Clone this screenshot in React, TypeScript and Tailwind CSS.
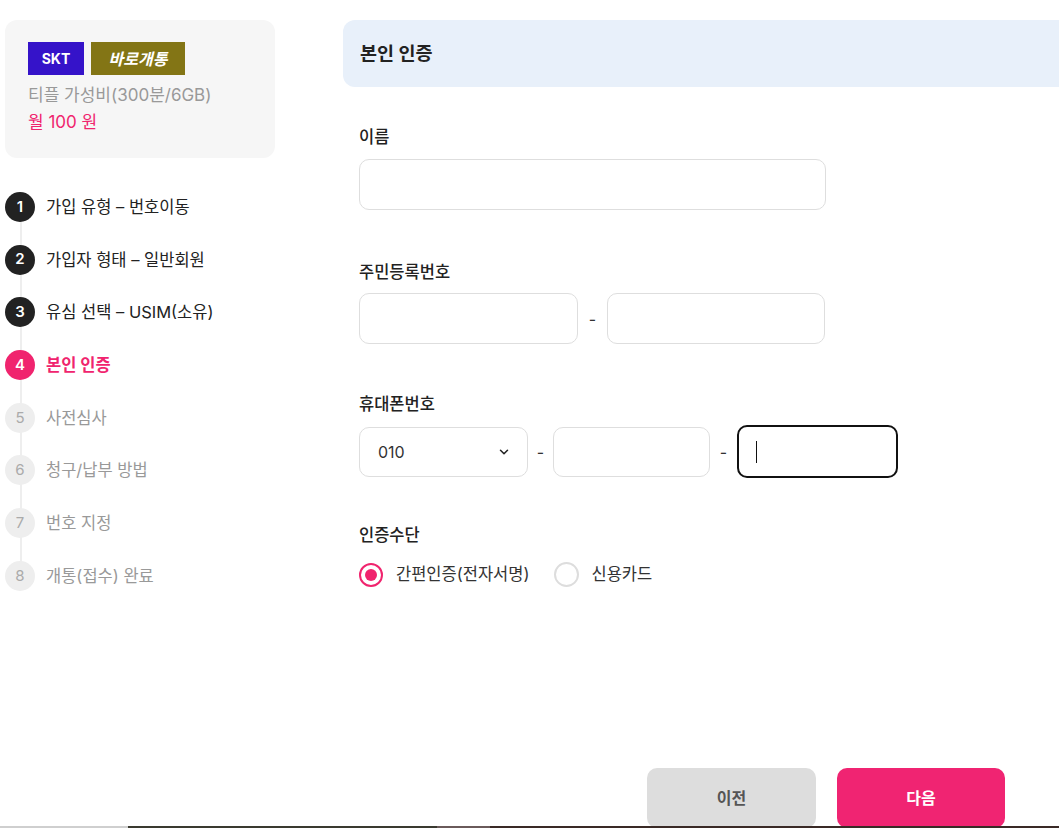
import React from 'react'

const steps = [
  { n: 1, label: '가입 유형 – 번호이동', state: 'done' },
  { n: 2, label: '가입자 형태 – 일반회원', state: 'done' },
  { n: 3, label: '유심 선택 – USIM(소유)', state: 'done' },
  { n: 4, label: '본인 인증', state: 'current' },
  { n: 5, label: '사전심사', state: 'todo' },
  { n: 6, label: '청구/납부 방법', state: 'todo' },
  { n: 7, label: '번호 지정', state: 'todo' },
  { n: 8, label: '개통(접수) 완료', state: 'todo' },
]

const font = { fontFamily: 'Inter, "Noto Sans CJK KR", sans-serif' }

function Field({ className = '' }: { className?: string }) {
  return <div className={`h-[51px] rounded-[10px] border border-[#dedede] bg-white ${className}`} />
}

export default function App() {
  return (
    <div className="relative w-[1059px] h-[828px] overflow-hidden bg-white text-[#222]" style={font}>
      <div className="flex gap-[68px] pl-[5px] pt-[20px] w-[1320px]">
        {/* Sidebar */}
        <aside className="w-[270px] shrink-0">
          <div className="rounded-[12px] bg-[#f6f6f6] px-[23px] pt-[22px] pb-[24px]">
            <div className="flex gap-[7px]">
              <span className="flex h-[33px] w-[56px] items-center justify-center bg-[#3513c9] text-[14px] font-bold text-white">SKT</span>
              <span className="flex h-[33px] w-[94px] items-center justify-center bg-[#837515] text-[16px] font-bold italic text-white">바로개통</span>
            </div>
            <p className="mt-[8px] text-[17px] leading-[24px] text-[#999]">티플 가성비(300분/6GB)</p>
            <p className="mt-[3px] text-[17px] leading-[24px] text-[#f0246e]">월 100 원</p>
          </div>

          <ol className="relative mt-[34px]">
            <div className="absolute left-[15px] top-[20px] h-[360px] w-[2px] bg-[#eeeeee]" />
            {steps.map((s) => (
              <li key={s.n} className="relative flex h-[52.7px] items-start gap-[11px]">
                <span
                  className={
                    s.state === 'done'
                      ? 'flex h-[30px] w-[30px] items-center justify-center rounded-full bg-[#222] text-[15px] font-semibold text-white'
                      : s.state === 'current'
                      ? 'flex h-[30px] w-[30px] items-center justify-center rounded-full bg-[#f0246e] text-[15px] font-semibold text-white'
                      : 'flex h-[30px] w-[30px] items-center justify-center rounded-full bg-[#eeeeee] text-[15px] text-[#aaa]'
                  }
                >
                  {s.n}
                </span>
                <span
                  className={
                    s.state === 'done'
                      ? 'text-[16.5px] leading-[30px] text-[#222]'
                      : s.state === 'current'
                      ? 'text-[16.5px] leading-[30px] font-bold text-[#f0246e]'
                      : 'text-[16.5px] leading-[30px] text-[#999]'
                  }
                >
                  {s.label}
                </span>
              </li>
            ))}
          </ol>
        </aside>

        {/* Main */}
        <main className="w-[966px] shrink-0">
          <div className="flex h-[67px] items-center rounded-l-[12px] bg-[#e8f0fa] px-[17px]">
            <h1 className="text-[18.5px] font-bold text-[#222]">본인 인증</h1>
          </div>

          <div className="pl-[16px]">
            <label className="mt-[38px] block text-[16.5px] font-medium leading-[24px]">이름</label>
            <Field className="mt-[10px] w-[467px]" />

            <label className="mt-[50px] block text-[16.5px] font-medium leading-[24px]">주민등록번호</label>
            <div className="mt-[9px] flex items-center">
              <Field className="w-[219px]" />
              <span className="w-[29px] text-center text-[16px] text-[#333]">-</span>
              <Field className="w-[218px]" />
            </div>

            <label className="mt-[48px] block text-[16.5px] font-medium leading-[24px]">휴대폰번호</label>
            <div className="mt-[9px] flex items-center">
              <div className="flex h-[50px] w-[169px] items-center justify-between rounded-[10px] border border-[#dedede] pl-[18px] pr-[16px]">
                <span className="text-[16px] text-[#333]">010</span>
                <svg width="14" height="14" viewBox="0 0 24 24" fill="none" stroke="#222" strokeWidth="2.6" strokeLinecap="round" strokeLinejoin="round">
                  <path d="M6 9l6 6 6-6" />
                </svg>
              </div>
              <span className="w-[25px] text-center text-[16px] text-[#333]">-</span>
              <div className="h-[50px] w-[157px] rounded-[10px] border border-[#dedede]" />
              <span className="w-[27px] text-center text-[16px] text-[#333]">-</span>
              <div className="flex h-[53px] w-[161px] items-center rounded-[10px] border-2 border-[#111] pl-[17px]">
                <span className="h-[22px] w-px bg-[#111]" />
              </div>
            </div>

            <label className="mt-[45px] block text-[16.5px] font-medium leading-[24px]">인증수단</label>
            <div className="mt-[15px] flex items-center">
              <span className="flex h-[24px] w-[24px] items-center justify-center rounded-full border-2 border-[#f0246e]">
                <span className="h-[12px] w-[12px] rounded-full bg-[#f0246e]" />
              </span>
              <span className="ml-[13px] text-[16.5px] text-[#333]">간편인증(전자서명)</span>
              <span className="ml-[25px] h-[25px] w-[25px] rounded-full border-2 border-[#ddd]" />
              <span className="ml-[12px] text-[16.5px] text-[#333]">신용카드</span>
            </div>
          </div>

          <div className="mt-[181px] flex justify-center gap-[21px]">
            <button className="h-[60px] w-[169px] rounded-[10px] bg-[#dddddd] text-[16px] font-bold text-[#555]">이전</button>
            <button className="h-[60px] w-[168px] rounded-[10px] bg-[#f02472] text-[16px] font-bold text-white">다음</button>
          </div>
        </main>
      </div>

      {/* bottom strip */}
      <div className="absolute bottom-0 left-0 flex h-[2px] w-full">
        <div className="w-[128px] bg-[#cfcfcf]" />
        <div className="w-[309px] bg-[#3a3a30]" />
        <div className="w-[53px] bg-[#6a5a5a]" />
        <div className="flex-1 bg-[#3a2a26]" />
      </div>
    </div>
  )
}
